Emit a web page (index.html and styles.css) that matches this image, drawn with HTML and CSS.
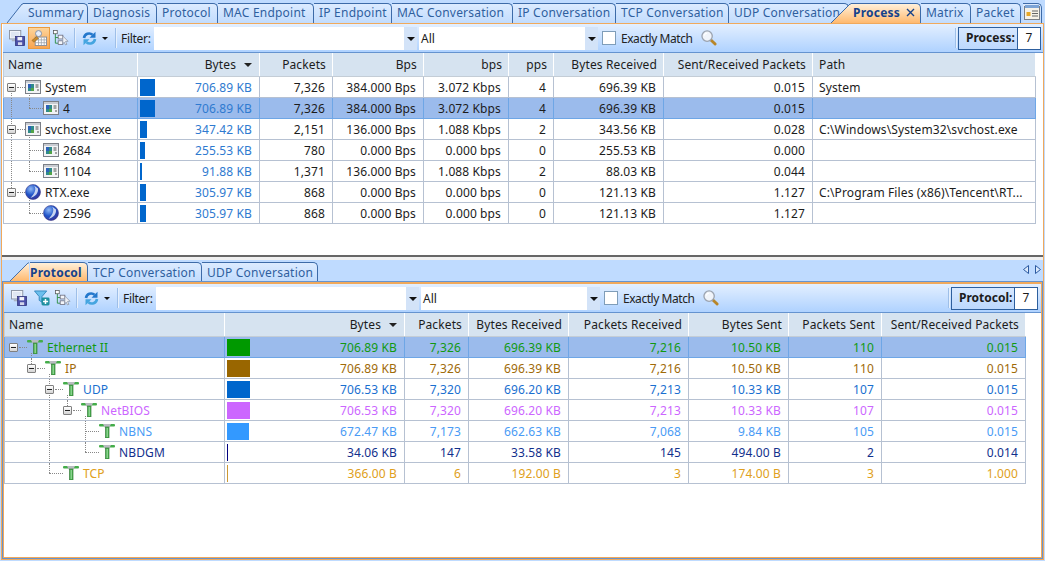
FILE: index.html
```html
<!DOCTYPE html>
<html>

<head>
	<title>Process</title>
	<link rel="stylesheet" href="styles.css">
</head>

<body>
	<!-- all icons live here, used with <use> below -->
	<svg class="defs">
		<defs>
			<linearGradient id="orangeTab" x1="0" y1="0" x2="0" y2="1">
				<stop offset="0" stop-color="#fff0da" />
				<stop offset="1" stop-color="#ffb96e" />
			</linearGradient>
			<linearGradient id="blueTab" x1="0" y1="0" x2="0" y2="1">
				<stop offset="0" stop-color="#dcebff" />
				<stop offset="1" stop-color="#c2dcfd" />
			</linearGradient>
			<radialGradient id="globe" cx="0.35" cy="0.3" r="0.8">
				<stop offset="0" stop-color="#8fb8f5" />
				<stop offset="0.5" stop-color="#1f54c8" />
				<stop offset="1" stop-color="#3a2f90" />
			</radialGradient>
		</defs>
		<symbol id="i-save" viewBox="0 0 17 17">
			<rect x="0.5" y="0.5" width="12" height="9" fill="#f4f7fb" stroke="#8a93a3" />
			<rect x="2" y="2" width="9" height="6" fill="#dfe7f2" />
			<rect x="3" y="10" width="6" height="2" fill="#aab2c0" />
			<rect x="7" y="7" width="9.5" height="9.5" fill="#4b4fa8" stroke="#2b2f78" stroke-width="0.8" />
			<rect x="9" y="7.5" width="5" height="3.5" fill="#f2f4fa" />
			<rect x="9.5" y="13" width="4.5" height="3" fill="#d4d7ea" />
		</symbol>
		<symbol id="i-person" viewBox="0 0 17 17">
			<rect x="4.5" y="7.5" width="12" height="9" fill="#fff" stroke="#8a8f98" />
			<path d="M5 10.5h11M5 13.5h11M8 8v8M11 8v8M14 8v8" stroke="#9aa0aa" stroke-width="0.8" />
			<circle cx="8" cy="3.8" r="3.2" fill="#e8eef8" stroke="#7d8ea8" />
			<path d="M1 11l5-4 2 2-5 4z" fill="#c98a2c" stroke="#8c5c16" stroke-width="0.5" />
		</symbol>
		<symbol id="i-tree" viewBox="0 0 17 17">
			<path d="M2.5 3v11h4M2.5 8h4" fill="none" stroke="#2f8f46" />
			<rect x="0.5" y="0.5" width="4" height="3.5" fill="#fff" stroke="#555" stroke-width="0.8" />
			<rect x="5.5" y="5.5" width="5" height="4" fill="#f4f6fa" stroke="#667" stroke-width="0.8" />
			<rect x="5.5" y="11.5" width="5" height="4" fill="#f4f6fa" stroke="#667" stroke-width="0.8" />
			<path d="M10.5 6.5l5.5 5.5-2.7 0.2 1.5 3-1.5 0.7-1.4-3-1.6 1.8z" fill="#eef1f6" stroke="#8a93a3" stroke-width="0.8" />
		</symbol>
		<symbol id="i-filter" viewBox="0 0 17 17">
			<path d="M0.5 1h13l-5 6v6l-3-2v-4z" fill="#6cc0ee" stroke="#2b7fb8" stroke-width="0.9" />
			<rect x="8" y="8" width="8.5" height="8.5" rx="1.5" fill="#1f8fa0" />
			<path d="M12.2 9.5v5.5M9.6 12.2h5.4" stroke="#fff" stroke-width="1.6" />
		</symbol>
		<symbol id="i-refresh" viewBox="0 0 15 15">
			<path d="M2 7a5.2 5.2 0 0 1 8.6-3.2" fill="none" stroke="#2478cc" stroke-width="2.6" />
			<path d="M13.5 0.8v6h-6z" fill="#2478cc" />
			<path d="M13 8a5.2 5.2 0 0 1-8.6 3.2" fill="none" stroke="#45a5e0" stroke-width="2.6" />
			<path d="M1.5 14.2v-6h6z" fill="#45a5e0" />
		</symbol>
		<symbol id="i-glass" viewBox="0 0 17 17">
			<path d="M10 10l5 5" stroke="#b8862a" stroke-width="3" stroke-linecap="round" />
			<circle cx="6.5" cy="6.5" r="5.5" fill="#f0f4fa" stroke="#9ca4b0" stroke-width="1.4" />
			<path d="M3.5 6a3 3 0 0 1 3-2.6" fill="none" stroke="#fff" stroke-width="1.2" />
		</symbol>
		<symbol id="i-window" viewBox="0 0 16 14">
			<rect x="0.5" y="0.5" width="15" height="13" fill="#f2f3f5" stroke="#7b7f86" />
			<rect x="1" y="1" width="14" height="2" fill="#c9ccd2" />
			<rect x="3" y="4" width="6" height="7" fill="#2f8a8a" />
			<rect x="3" y="4" width="3" height="4" fill="#2d62b8" />
			<rect x="6" y="8" width="3" height="3" fill="#52a348" />
			<path d="M10.5 5h3M10.5 7h3M13 9v2" stroke="#555" />
		</symbol>
		<symbol id="i-globe" viewBox="0 0 16 16">
			<circle cx="8" cy="8" r="7.5" fill="url(#globe)" stroke="#3c3c8c" stroke-width="0.6" />
			<path d="M9 1.5c2.5 3 1.5 7-3.5 12.5 5-1.5 8-5 7.5-9.5z" fill="#fff" opacity="0.75" />
		</symbol>
		<symbol id="i-proto" viewBox="0 0 16 15">
			<rect x="0" y="1" width="16" height="2.5" rx="1" fill="#44ad4a" />
			<path d="M4 1h8l-2 4H6z" fill="#b8bcc0" />
			<rect x="6.5" y="4" width="3.5" height="11" fill="#45b04c" stroke="#3a7d3e" stroke-width="0.7" />
			<rect x="7.7" y="5" width="1" height="9" fill="#a8e0ab" />
		</symbol>
		<symbol id="i-card" viewBox="0 0 16 16">
			<rect x="0.5" y="2.5" width="15" height="13" fill="#f6f2e8" stroke="#7b7f86" />
			<rect x="1" y="1" width="14" height="3" fill="#7ca4d6" />
			<rect x="2.5" y="8" width="4" height="4" fill="#e8a828" />
			<path d="M8 7h6M8 9.5h6M8 12h6" stroke="#666" />
		</symbol>
	</svg>

	<div class="app">
		<!-- top tab strip -->
		<div class="tabs page-tabs">
			<svg class="slant" viewBox="0 0 16 20"><path d="M0 20L15 1h1v19z" fill="url(#blueTab)" /><path d="M0 20L15 1h1" fill="none" stroke="#3d6ba8" /></svg>
			<div class="tab tab-summary">Summary</div>
			<div class="tab tab-diagnosis">Diagnosis</div>
			<div class="tab tab-protocol">Protocol</div>
			<div class="tab tab-mac-end">MAC Endpoint</div>
			<div class="tab tab-ip-end">IP Endpoint</div>
			<div class="tab tab-mac-conv">MAC Conversation</div>
			<div class="tab tab-ip-conv">IP Conversation</div>
			<div class="tab tab-tcp-conv">TCP Conversation</div>
			<div class="tab tab-udp-conv">UDP Conversation</div>
			<svg class="slant slant-active" viewBox="0 0 20 20"><path d="M0 20L19 1h1v19z" fill="url(#orangeTab)" /><path d="M0 20L19 1h1" fill="none" stroke="#3d6ba8" /></svg>
			<div class="tab tab-active tab-process">Process<svg class="close" viewBox="0 0 9 9"><path d="M1 1l7 7M8 1l-7 7" stroke="#15428b" stroke-width="1.4" /></svg></div>
			<div class="tab tab-small">Matrix</div>
			<div class="tab tab-small">Packet</div>
			<div class="tab tab-icon"><svg class="icon"><use href="#i-card" /></svg></div>
		</div>

		<div class="frame">
			<div class="panel panel-top">
				<div class="toolbar">
					<svg class="icon tool"><use href="#i-save" /></svg>
					<span class="tool-on"><svg class="icon"><use href="#i-person" /></svg></span>
					<svg class="icon tool"><use href="#i-tree" /></svg>
					<span class="sep"></span>
					<svg class="icon tool-refresh"><use href="#i-refresh" /></svg>
					<span class="arrow"></span>
					<span class="sep"></span>
					<span class="filter-label">Filter:</span>
					<div class="combo combo-filter"><span></span><i></i></div>
					<div class="combo combo-all"><span>All</span><i></i></div>
					<span class="check"></span>
					<span class="exact">Exactly Match</span>
					<svg class="icon glass"><use href="#i-glass" /></svg>
					<span class="sep sep-right"></span>
					<div class="counter counter-process"><b>Process:</b><span>7</span></div>
				</div>

				<table class="grid grid-top">
					<colgroup>
						<col class="t1"><col class="t2"><col class="t3"><col class="t4"><col class="t5"><col class="t6"><col class="t7"><col class="t8"><col>
					</colgroup>
					<tr class="head">
						<th class="left name-head">Name</th><th><span class="sort">Bytes</span></th><th>Packets</th><th>Bps</th><th>bps</th><th>pps</th><th>Bytes Received</th><th>Sent/Received Packets</th><th class="left">Path</th>
					</tr>
					<tr>
						<td class="name"><div class="tree"><span class="guide stub down"><i class="box"></i><i class="kid"></i></span><svg class="node win"><use href="#i-window" /></svg><span class="label">System</span></div></td>
						<td class="bytes"><div class="bar-cell"><i class="bar" style="width:15px"></i>706.89 KB</div></td>
						<td>7,326</td><td>384.000 Bps</td><td>3.072 Kbps</td><td>4</td><td>696.39 KB</td><td>0.015</td><td class="left">System</td>
					</tr>
					<tr class="sel">
						<td class="name"><div class="tree"><span class="guide line"></span><span class="guide end"></span><svg class="node win"><use href="#i-window" /></svg><span class="label">4</span></div></td>
						<td class="bytes"><div class="bar-cell"><i class="bar" style="width:15px"></i>706.89 KB</div></td>
						<td>7,326</td><td>384.000 Bps</td><td>3.072 Kbps</td><td>4</td><td>696.39 KB</td><td>0.015</td><td class="left"></td>
					</tr>
					<tr>
						<td class="name"><div class="tree"><span class="guide stub line"><i class="box"></i><i class="kid"></i></span><svg class="node win"><use href="#i-window" /></svg><span class="label">svchost.exe</span></div></td>
						<td class="bytes"><div class="bar-cell"><i class="bar" style="width:7px"></i>347.42 KB</div></td>
						<td>2,151</td><td>136.000 Bps</td><td>1.088 Kbps</td><td>2</td><td>343.56 KB</td><td>0.028</td><td class="left">C:\Windows\System32\svchost.exe</td>
					</tr>
					<tr>
						<td class="name"><div class="tree"><span class="guide line"></span><span class="guide tee"></span><svg class="node win"><use href="#i-window" /></svg><span class="label">2684</span></div></td>
						<td class="bytes"><div class="bar-cell"><i class="bar" style="width:5px"></i>255.53 KB</div></td>
						<td>780</td><td>0.000 Bps</td><td>0.000 bps</td><td>0</td><td>255.53 KB</td><td>0.000</td><td class="left"></td>
					</tr>
					<tr>
						<td class="name"><div class="tree"><span class="guide line"></span><span class="guide end"></span><svg class="node win"><use href="#i-window" /></svg><span class="label">1104</span></div></td>
						<td class="bytes"><div class="bar-cell"><i class="bar" style="width:2px"></i>91.88 KB</div></td>
						<td>1,371</td><td>136.000 Bps</td><td>1.088 Kbps</td><td>2</td><td>88.03 KB</td><td>0.044</td><td class="left"></td>
					</tr>
					<tr>
						<td class="name"><div class="tree"><span class="guide stub up"><i class="box"></i><i class="kid"></i></span><svg class="node"><use href="#i-globe" /></svg><span class="label">RTX.exe</span></div></td>
						<td class="bytes"><div class="bar-cell"><i class="bar" style="width:6px"></i>305.97 KB</div></td>
						<td>868</td><td>0.000 Bps</td><td>0.000 bps</td><td>0</td><td>121.13 KB</td><td>1.127</td><td class="left">C:\Program Files (x86)\Tencent\RT...</td>
					</tr>
					<tr>
						<td class="name"><div class="tree"><span class="guide"></span><span class="guide end"></span><svg class="node"><use href="#i-globe" /></svg><span class="label">2596</span></div></td>
						<td class="bytes"><div class="bar-cell"><i class="bar" style="width:6px"></i>305.97 KB</div></td>
						<td>868</td><td>0.000 Bps</td><td>0.000 bps</td><td>0</td><td>121.13 KB</td><td>1.127</td><td class="left"></td>
					</tr>
				</table>
			</div>

			<div class="splitter"></div>

			<!-- lower half -->
			<div class="lower">
				<div class="tabs lower-tabs">
					<svg class="slant slant-lower" viewBox="0 0 20 20"><path d="M0 20L19 1h1v19z" fill="url(#orangeTab)" /><path d="M0 20L19 1h1" fill="none" stroke="#3d6ba8" /></svg>
					<div class="tab tab-active tab-proto">Protocol</div>
					<div class="tab tab-lower-tcp">TCP Conversation</div>
					<div class="tab tab-lower-udp">UDP Conversation</div>
					<div class="scroll-arrows">
						<svg class="tri" viewBox="0 0 6 9"><path d="M5.5 0.5v8L0.5 4.5z" fill="#dbe9fb" stroke="#2c5aa0" /></svg>
						<svg class="tri" viewBox="0 0 6 9"><path d="M0.5 0.5v8L5.5 4.5z" fill="#dbe9fb" stroke="#2c5aa0" /></svg>
					</div>
				</div>

				<div class="panel panel-bottom">
					<div class="toolbar">
						<svg class="icon tool"><use href="#i-save" /></svg>
						<svg class="icon tool-filter"><use href="#i-filter" /></svg>
						<svg class="icon tool"><use href="#i-tree" /></svg>
						<span class="sep"></span>
						<svg class="icon tool-refresh"><use href="#i-refresh" /></svg>
						<span class="arrow"></span>
						<span class="sep"></span>
						<span class="filter-label">Filter:</span>
						<div class="combo combo-filter"><span></span><i></i></div>
						<div class="combo combo-all"><span>All</span><i></i></div>
						<span class="check"></span>
						<span class="exact">Exactly Match</span>
						<svg class="icon glass"><use href="#i-glass" /></svg>
						<span class="sep sep-right"></span>
						<div class="counter counter-protocol"><b>Protocol:</b><span>7</span></div>
					</div>

					<table class="grid grid-bottom">
						<colgroup>
							<col class="b1"><col class="b2"><col class="b3"><col class="b4"><col class="b5"><col class="b6"><col class="b7"><col>
						</colgroup>
						<tr class="head">
							<th class="left name-head">Name</th><th><span class="sort">Bytes</span></th><th>Packets</th><th>Bytes Received</th><th>Packets Received</th><th>Bytes Sent</th><th>Packets Sent</th><th>Sent/Received Packets</th>
						</tr>
						<tr class="sel eth">
							<td class="name"><div class="tree"><span class="guide stub"><i class="box"></i><i class="kid"></i></span><svg class="node proto"><use href="#i-proto" /></svg><span class="label">Ethernet II</span></div></td>
							<td><div class="bar-cell"><i class="bar" style="width:23px"></i>706.89 KB</div></td>
							<td>7,326</td><td>696.39 KB</td><td>7,216</td><td>10.50 KB</td><td>110</td><td>0.015</td>
						</tr>
						<tr class="ip">
							<td class="name"><div class="tree"><span class="guide"></span><span class="guide stub up"><i class="box"></i><i class="kid"></i></span><svg class="node proto"><use href="#i-proto" /></svg><span class="label">IP</span></div></td>
							<td><div class="bar-cell"><i class="bar" style="width:23px"></i>706.89 KB</div></td>
							<td>7,326</td><td>696.39 KB</td><td>7,216</td><td>10.50 KB</td><td>110</td><td>0.015</td>
						</tr>
						<tr class="udp">
							<td class="name"><div class="tree"><span class="guide"></span><span class="guide"></span><span class="guide stub line"><i class="box"></i><i class="kid"></i></span><svg class="node proto"><use href="#i-proto" /></svg><span class="label">UDP</span></div></td>
							<td><div class="bar-cell"><i class="bar" style="width:23px"></i>706.53 KB</div></td>
							<td>7,320</td><td>696.20 KB</td><td>7,213</td><td>10.33 KB</td><td>107</td><td>0.015</td>
						</tr>
						<tr class="netbios">
							<td class="name"><div class="tree"><span class="guide"></span><span class="guide"></span><span class="guide line"></span><span class="guide stub up"><i class="box"></i><i class="kid"></i></span><svg class="node proto"><use href="#i-proto" /></svg><span class="label">NetBIOS</span></div></td>
							<td><div class="bar-cell"><i class="bar" style="width:23px"></i>706.53 KB</div></td>
							<td>7,320</td><td>696.20 KB</td><td>7,213</td><td>10.33 KB</td><td>107</td><td>0.015</td>
						</tr>
						<tr class="nbns">
							<td class="name"><div class="tree"><span class="guide"></span><span class="guide"></span><span class="guide line"></span><span class="guide"></span><span class="guide tee"></span><svg class="node proto"><use href="#i-proto" /></svg><span class="label">NBNS</span></div></td>
							<td><div class="bar-cell"><i class="bar" style="width:22px"></i>672.47 KB</div></td>
							<td>7,173</td><td>662.63 KB</td><td>7,068</td><td>9.84 KB</td><td>105</td><td>0.015</td>
						</tr>
						<tr class="nbdgm">
							<td class="name"><div class="tree"><span class="guide"></span><span class="guide"></span><span class="guide line"></span><span class="guide"></span><span class="guide end"></span><svg class="node proto"><use href="#i-proto" /></svg><span class="label">NBDGM</span></div></td>
							<td><div class="bar-cell"><i class="bar" style="width:1px"></i>34.06 KB</div></td>
							<td>147</td><td>33.58 KB</td><td>145</td><td>494.00 B</td><td>2</td><td>0.014</td>
						</tr>
						<tr class="tcp">
							<td class="name"><div class="tree"><span class="guide"></span><span class="guide"></span><span class="guide end"></span><svg class="node proto"><use href="#i-proto" /></svg><span class="label">TCP</span></div></td>
							<td><div class="bar-cell"><i class="bar" style="width:1px"></i>366.00 B</div></td>
							<td>6</td><td>192.00 B</td><td>3</td><td>174.00 B</td><td>3</td><td>1.000</td>
						</tr>
					</table>
				</div>
			</div>
		</div>
	</div>
</body>

</html>
```

FILE: styles.css
```css
body {
	margin: 0;
	overflow: hidden;
	font-family: "Noto Sans", sans-serif;
	font-size: 12px;
	color: #1c1c1c;
}

.defs {
	position: absolute;
	width: 0;
	height: 0;
}

.app {
	width: 1045px;
	height: 561px;
	display: flex;
	flex-direction: column;
	background-color: #bfdbff;
}

/* tabs */
.tabs {
	display: flex;
	align-items: flex-end;
	flex: none;
}

.page-tabs {
	height: 23px;
	padding-left: 7px;
}

.lower-tabs {
	height: 22px;
	box-sizing: border-box;
	background-color: #bfdbff;
	padding-left: 7px;
	border-bottom: 1px solid #6593cf;
}

.slant {
	width: 16px;
	height: 20px;
	flex: none;
}

.slant-active {
	width: 20px;
	margin-left: -18px;
	position: relative;
	z-index: 1;
}

.slant-lower {
	width: 21px;
	height: 19px;
}

.tab {
	height: 20px;
	line-height: 18px;
	padding: 0 0 0 5px;
	flex: none;
	box-sizing: border-box;
	border: 1px solid #3d6ba8;
	border-left: none;
	border-bottom: none;
	border-radius: 0 5px 0 0;
	background: linear-gradient(#dcebff, #c2dcfd);
	color: #2f5f9e;
	white-space: nowrap;
	overflow: hidden;
	letter-spacing: 0.22px;
}

.lower-tabs .tab {
	height: 19px;
	line-height: 20px;
}

/* each tab has its own width */
.tab-summary { width: 65px; }
.tab-diagnosis { width: 69px; }
.tab-protocol { width: 61px; }
.tab-mac-end { width: 96px; }
.tab-ip-end { width: 78px; }
.tab-mac-conv { width: 121px; }
.tab-ip-conv { width: 103px; }
.tab-tcp-conv { width: 113px; }
.tab-udp-conv { width: 120px; }
.tab-process { width: 70px; }
.tab-small { width: 50px; }
.tab-proto { width: 58px; }
.tab-lower-tcp { width: 114px; }
.tab-lower-udp { width: 116px; }

.tab-active {
	background: linear-gradient(#fff0da, #ffb96e);
	color: #15428b;
	font-weight: bold;
	position: relative;
	z-index: 1;
	padding-left: 0;
}

.tab-process {
	padding-left: 2px;
}

.close {
	width: 9px;
	height: 9px;
	margin-left: 6px;
}

.tab-icon {
	margin-left: 2px;
	padding: 0 1px;
	height: 20px;
}

.scroll-arrows {
	margin-left: auto;
	display: flex;
	gap: 6px;
	padding: 0 2px 7px 0;
}

.tri {
	width: 6px;
	height: 9px;
	flex: none;
}

/* frame round both panels */
.frame {
	flex: 1;
	display: flex;
	flex-direction: column;
	margin: 0 1px 1px 1px;
	border: 1px solid #f0a95c;
	background-color: #fff;
	min-height: 0;
}

.panel-top {
	height: 231px;
	flex: none;
	margin-left: 1px;
}

.panel-top .counter {
	margin-right: 2px;
}

.splitter {
	height: 3px;
	flex: none;
	border-top: 2px solid #666;
	background-color: #f0f0f0;
}

.lower {
	flex: 1;
	display: flex;
	flex-direction: column;
	background-color: #6593cf;
	min-height: 0;
}

.panel-bottom {
	flex: 1;
	margin: 0 1px 1px 1px;
	background-color: #fff;
	border: 1px solid #f0a95c;
	border-top-width: 2px;
}

.panel-bottom .toolbar {
	padding-left: 7px;
}

.panel-bottom .counter {
	margin-right: 3px;
}

/* toolbar */
.toolbar {
	height: 28px;
	display: flex;
	align-items: center;
	background: linear-gradient(#e3efff, #afd2ff);
	border-bottom: 1px solid #6593cf;
	padding-left: 6px;
}

.icon {
	width: 16px;
	height: 16px;
	flex: none;
}

.tool {
	margin-right: 3px;
}

.tool-on {
	width: 22px;
	height: 22px;
	margin-right: 3px;
	display: flex;
	align-items: center;
	justify-content: center;
	background: linear-gradient(#fdd49a, #f9a550);
	border: 1px solid #e89b40;
	box-sizing: border-box;
}

.tool-filter {
	margin: 0 5px 0 4px;
}

.tool-refresh {
	width: 15px;
	height: 15px;
	margin-left: 6px;
}

.sep {
	width: 1px;
	height: 20px;
	background-color: #9ebfe8;
	border-right: 1px solid #e6f0fd;
	margin-left: 2px;
	flex: none;
}

.arrow {
	width: 0;
	height: 0;
	margin: 0 5px 0 5px;
	border-left: 3px solid transparent;
	border-right: 3px solid transparent;
	border-top: 3px solid #111;
	flex: none;
}

.filter-label {
	width: 29px;
	margin: 0 4px 0 4px;
	flex: none;
	letter-spacing: -0.3px;
}

.combo {
	height: 23px;
	display: flex;
	background-color: #fff;
	margin-right: 2px;
	flex: none;
	box-sizing: border-box;
}

.combo span {
	flex: 1;
	line-height: 23px;
	padding-left: 2px;
}

.combo i {
	width: 13px;
	background-color: #d3e3f8;
	position: relative;
}

.combo i::after {
	content: "";
	position: absolute;
	left: 3px;
	top: 10px;
	border-left: 4px solid transparent;
	border-right: 4px solid transparent;
	border-top: 4px solid #111;
}

.combo-filter {
	width: 263px;
}

.combo-all {
	width: 179px;
}

.check {
	width: 12px;
	height: 12px;
	border: 1px solid #7f9db9;
	background-color: #fff;
	margin-left: 2px;
	flex: none;
}

.exact {
	width: 72px;
	margin-left: 5px;
	color: #222;
	white-space: nowrap;
	letter-spacing: -0.45px;
	flex: none;
}

.glass {
	margin-left: 8px;
}

.sep-right {
	margin-left: auto;
	margin-right: 1px;
}

.counter {
	height: 21px;
	display: flex;
	align-items: stretch;
	border: 1px solid #2d5f9e;
	line-height: 20px;
	flex: none;
}

.counter b {
	padding-left: 7px;
	flex: 1;
	background: linear-gradient(#d7e8ff, #bcd8fd);
}

.counter span {
	background-color: #fff;
	border-left: 1px solid #2d5f9e;
	width: 22px;
	text-align: center;
}

.counter-process {
	width: 81px;
}

.counter-protocol {
	width: 85px;
}

/* the two grids */
.grid {
	border-collapse: collapse;
	table-layout: fixed;
	box-sizing: border-box;
	letter-spacing: 0.12px;
}

.grid-top {
	width: 1033px;
}

.grid-bottom {
	width: 1022px;
}

.t1 { width: 134px; }
.t2 { width: 122px; }
.t3 { width: 73px; }
.t4 { width: 91px; }
.t5 { width: 85px; }
.t6 { width: 45px; }
.t7 { width: 110px; }
.t8 { width: 149px; }

.b1 { width: 220px; }
.b2 { width: 180px; }
.b3 { width: 64px; }
.b4 { width: 100px; }
.b5 { width: 120px; }
.b6 { width: 100px; }
.b7 { width: 93px; }

.grid tr {
	height: 21px;
}

.grid .head {
	height: 23px;
}

.grid th {
	font-weight: normal;
	text-align: right;
	background-color: #d6e3f0;
	padding: 0 6px 0 4px;
	border-right: 1px solid #fff;
	border-left: 1px solid #bfcfe0;
	border-bottom: 1px solid #c4cdd6;
	white-space: nowrap;
}

.grid td {
	text-align: right;
	padding: 1px 7px 0 2px;
	border: 1px solid #b6c1d2;
	white-space: nowrap;
	overflow: hidden;
}

.grid .left {
	text-align: left;
	padding-left: 6px;
}

.grid .name-head {
	padding-left: 4px;
}

.sort::after {
	content: "";
	display: inline-block;
	margin-left: 8px;
	margin-right: 1px;
	vertical-align: 2px;
	border-left: 4px solid transparent;
	border-right: 4px solid transparent;
	border-top: 4px solid #222;
}

.grid .sel td {
	background-color: #9bbbec;
	border-color: #6ea6e6;
}

.bytes {
	color: #2f7ad0;
}

/* name column with tree guides */
.grid td.name {
	padding: 0;
	text-align: left;
}

.grid-bottom td.name {
	padding-left: 1px;
}

.tree {
	display: flex;
	align-items: center;
	height: 20px;
	margin-left: -1px;
}

.label {
	margin-top: 2px;
}

.guide {
	width: 18px;
	height: 20px;
	flex: none;
	position: relative;
}

/* vertical and horizontal dotted connectors */
.line::before,
.tee::before,
.end::before,
.down::before,
.up::before {
	content: "";
	position: absolute;
	left: 8px;
	top: 0;
	height: 21px;
	border-left: 1px dotted #888;
}

.end::before,
.up::before {
	height: 10px;
}

.down::before {
	top: 10px;
	height: 11px;
}

.tee::after,
.end::after,
.stub::after {
	content: "";
	position: absolute;
	left: 8px;
	top: 10px;
	width: 14px;
	border-top: 1px dotted #888;
}

.stub::after {
	left: 14px;
	width: 8px;
}

/* line from under a parent icon down to its children */
.kid {
	position: absolute;
	left: 26px;
	top: 16px;
	height: 5px;
	border-left: 1px dotted #888;
}

/* expand box sits on top of the connector */
.box {
	position: absolute;
	left: 4px;
	top: 6px;
	width: 7px;
	height: 7px;
	border: 1px solid #808080;
	border-radius: 1px;
	background: linear-gradient(#222, #222) no-repeat center / 5px 1px,
		linear-gradient(#fff, #d4d4d4);
	z-index: 1;
}

.node {
	width: 16px;
	height: 16px;
	margin: 0 4px;
	flex: none;
	position: relative;
}

.win {
	height: 14px;
}

.proto {
	height: 15px;
}

/* bars in the Bytes column */
.bar-cell {
	display: flex;
	align-items: center;
	justify-content: space-between;
}

.bar {
	height: 17px;
	background-color: #0066cc;
	flex: none;
}

/* colour per protocol */
.eth td { color: #119911; }
.eth .bar { background-color: #009900; }
.ip td { color: #a06a08; }
.ip .bar { background-color: #996600; }
.udp td { color: #1a6fd0; }
.udp .bar { background-color: #0066cc; }
.netbios td { color: #cc66ff; }
.netbios .bar { background-color: #cc66ff; }
.nbns td { color: #4a9bf5; }
.nbns .bar { background-color: #3399ff; }
.nbdgm td { color: #12308c; }
.nbdgm .bar { background-color: #000080; }
.tcp td { color: #e0a020; }
.tcp .bar { background-color: #cc9933; }
```
